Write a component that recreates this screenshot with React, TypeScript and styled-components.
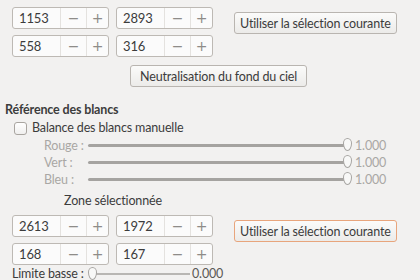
import React from 'react'
import styled, { createGlobalStyle } from 'styled-components'

const GlobalStyle = createGlobalStyle`
  html, body {
    margin: 0;
    padding: 0;
    background: #f2f1f0;
  }
  body {
    width: 420px;
    height: 280px;
    overflow: hidden;
    font-family: Lato, "Open Sans", sans-serif;
    font-size: 12.5px;
    letter-spacing: -0.15px;
    color: #3c3c3c;
  }
`

interface SpinProps {
  value: number
}

const SpinButton: React.FC<SpinProps> = ({ value }) => (
  <SpinBox>
    <SpinEntry>{value}</SpinEntry>
    <SpinStep>−</SpinStep>
    <SpinStep>+</SpinStep>
  </SpinBox>
)

interface SliderProps {
  label: string
  value: string
  percent: number
  disabled?: boolean
}

const SliderRow: React.FC<SliderProps> = ({ label, value, percent, disabled }) => (
  <SliderLine disabled={disabled}>
    <SliderLabel>{label}</SliderLabel>
    <Track>
      <Thumb style={{ left: `calc(${percent}% - 5px)` }} />
    </Track>
    <SliderValue>{value}</SliderValue>
  </SliderLine>
)

const SpinPair: React.FC<{ values: number[] }> = ({ values }) => (
  <SpinGrid>
    {values.map((v, i) => <SpinButton key={i} value={v} />)}
  </SpinGrid>
)

export default function App() {
  return (
    <Page>
      <GlobalStyle />
      <SpinSection top={7}>
        <SpinPair values={[1153, 2893, 558, 316]} />
        <ButtonCol offset={5}>
          <Button>Utiliser la sélection courante</Button>
        </ButtonCol>
      </SpinSection>
      <CenterRow>
        <Button pad={9}>Neutralisation du fond du ciel</Button>
      </CenterRow>

      <SectionTitle>Référence des blancs</SectionTitle>
      <CheckRow>
        <CheckBox />
        <span>Balance des blancs manuelle</span>
      </CheckRow>
      <Sliders>
        <SliderRow label="Rouge :" value="1.000" percent={100} disabled />
        <SliderRow label="Vert :" value="1.000" percent={100} disabled />
        <SliderRow label="Bleu :" value="1.000" percent={100} disabled />
      </Sliders>

      <ZoneTitle>Zone sélectionnée</ZoneTitle>
      <SpinSection top={6}>
        <SpinPair values={[2613, 1972, 168, 167]} />
        <ButtonCol offset={5}>
          <Button focused>Utiliser la sélection courante</Button>
        </ButtonCol>
      </SpinSection>
      <LimitRow>
        <LimitLabel>Limite basse :</LimitLabel>
        <LimitTrack>
          <Thumb style={{ left: '-1px' }} />
        </LimitTrack>
        <LimitValue>0.000</LimitValue>
      </LimitRow>
    </Page>
  )
}

//#region Styled components
const Page = styled.div`
  display: flex;
  flex-direction: column;
  width: 420px;
  height: 280px;
`

const SpinSection = styled.div<{ top: number }>`
  display: flex;
  align-items: flex-start;
  padding-left: 12px;
  margin-top: ${p => p.top}px;
`

const SpinGrid = styled.div`
  display: grid;
  grid-template-columns: 97px 97px;
  column-gap: 7px;
  row-gap: 6px;
`

const SpinBox = styled.div`
  display: flex;
  height: 22px;
  box-sizing: border-box;
  border: 1px solid #bdb9b4;
  border-radius: 3px;
  background: #fbfbfb;
  overflow: hidden;
`

const SpinEntry = styled.div`
  flex: 1;
  display: flex;
  align-items: center;
  padding-left: 6px;
  font-size: 13px;
  color: #3c3c3c;
`

const SpinStep = styled.div`
  width: 25px;
  display: flex;
  align-items: center;
  justify-content: center;
  border-left: 1px solid #e4e2df;
  color: #8e8c89;
  font-family: "DejaVu Sans", sans-serif;
  font-size: 14px;
  letter-spacing: 0;

  &:last-child {
    width: 21px;
  }
`

const ButtonCol = styled.div<{ offset: number }>`
  margin-left: 21px;
  padding-top: ${p => p.offset}px;
`

const Button = styled.button<{ focused?: boolean; pad?: number }>`
  height: 22px;
  box-sizing: border-box;
  padding: 0 ${p => p.pad ?? 5}px;
  font: inherit;
  letter-spacing: inherit;
  color: #3c3c3c;
  border: 1px solid ${p => (p.focused ? '#e8a57c' : '#b9b5b0')};
  border-radius: 3px;
  background: linear-gradient(#fbfbfa, #ecebe9);
  white-space: nowrap;
`

const CenterRow = styled.div`
  padding-left: 130px;
  margin-top: 8px;
`

const SectionTitle = styled.div`
  font-weight: bold;
  margin-top: 15px;
  padding-left: 5px;
  line-height: 16px;
`

const CheckRow = styled.label`
  display: flex;
  align-items: center;
  gap: 5px;
  padding-left: 14px;
  margin-top: 2px;
  line-height: 16px;
`

const CheckBox = styled.span`
  width: 13px;
  height: 13px;
  box-sizing: border-box;
  border: 1px solid #a9a5a0;
  border-radius: 3px;
  background: linear-gradient(#ffffff, #f0efee);
`

const Sliders = styled.div`
  display: flex;
  flex-direction: column;
  gap: 1px;
  margin-top: 1px;
`

const SliderLine = styled.div<{ disabled?: boolean }>`
  display: flex;
  align-items: center;
  height: 16px;
  padding-left: 44px;
  color: ${p => (p.disabled ? '#a9a7a4' : '#3c3c3c')};
`

const SliderLabel = styled.span`
  width: 44px;
`

const Track = styled.div`
  position: relative;
  width: 260px;
  height: 3px;
  border-radius: 2px;
  background: #a5a3a0;
`

const Thumb = styled.span`
  position: absolute;
  top: -6px;
  width: 9px;
  height: 13px;
  box-sizing: border-box;
  border: 1px solid #a6a4a1;
  border-radius: 50% 50% 50% 50% / 40% 40% 60% 60%;
  background: #f8f8f7;
`

const SliderValue = styled.span`
  margin-left: 7px;
`

const ZoneTitle = styled.div`
  width: 226px;
  text-align: center;
  margin-top: 6px;
  line-height: 16px;
`

const LimitRow = styled.div`
  display: flex;
  align-items: center;
  padding-left: 12px;
  margin-top: 1px;
  height: 16px;
`

const LimitLabel = styled.span`
  width: 77px;
`

const LimitTrack = styled.div`
  position: relative;
  width: 101px;
  height: 2px;
  background: #b8b6b3;
`

const LimitValue = styled.span`
  margin-left: 2px;
  color: #5a5856;
`
//#endregion
